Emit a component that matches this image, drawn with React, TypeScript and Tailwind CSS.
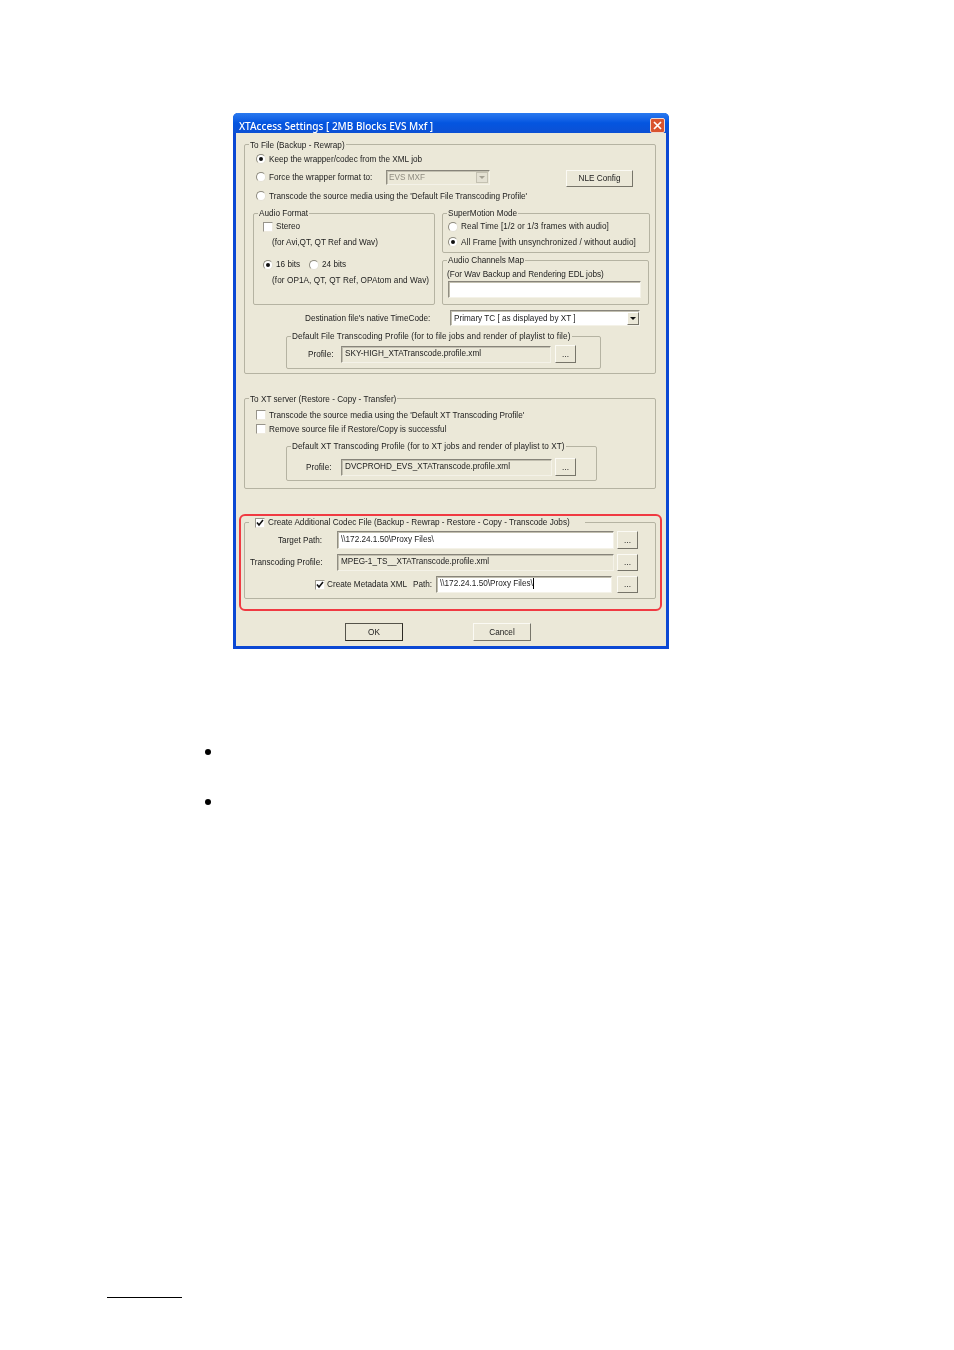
import type { ReactNode } from 'react'

const sunken = 'border border-t-[#87847a] border-l-[#918e82] border-r-[#f4f2e8] border-b-[#f4f2e8] shadow-[inset_1px_1px_0_#c2bfb0]'

function Group({ title, className, low, children }: { title: ReactNode; className: string; low?: boolean; children?: ReactNode }) {
  return (
    <fieldset className={`border border-[#b5b3a2] rounded-[2px] shrink-0 ${className}`}>
      <legend className={`ml-[4px] px-[1px] h-[12px] leading-[12px] ${low ? 'pt-[2px]' : 'pt-[1px]'}`}>{title}</legend>
      {children}
    </fieldset>
  )
}

function Radio({ on }: { on?: boolean }) {
  return (
    <span className="w-[10px] h-[10px] rounded-full bg-white border border-t-[#8d8a7d] border-l-[#8d8a7d] border-r-[#e4e1d3] border-b-[#e4e1d3] flex items-center justify-center shrink-0">
      {on && <span className="w-[4px] h-[4px] rounded-full bg-[#111]" />}
    </span>
  )
}

function Check({ on }: { on?: boolean }) {
  return (
    <span className="w-[10px] h-[10px] bg-white shrink-0 flex items-center justify-center border border-t-[#97948a] border-l-[#97948a] border-r-[#eeeade] border-b-[#eeeade]">
      {on && (
        <svg width="8" height="8" viewBox="0 0 8 8">
          <path d="M1 3.5 L3 6 L7 1" fill="none" stroke="#111" strokeWidth="1.6" />
        </svg>
      )}
    </span>
  )
}

function Btn({ label, className, dark }: { label: string; className: string; dark?: boolean }) {
  return (
    <div
      className={`flex items-center justify-center shrink-0 bg-[#ebe8d8] border ${
        dark
          ? 'border-t-[#55534a] border-l-[#55534a] border-r-[#2c2a24] border-b-[#2c2a24]'
          : 'border-t-[#fbfaf4] border-l-[#fbfaf4] border-r-[#77756a] border-b-[#77756a]'
      } ${className}`}
    >
      {label}
    </div>
  )
}

function Field({ value, className, white }: { value: ReactNode; className: string; white?: boolean }) {
  return (
    <div className={`flex items-center pl-[3px] pb-[2px] shrink-0 ${white ? 'bg-white' : 'bg-[#ebe8d8]'} ${sunken} ${className}`}>
      {value}
    </div>
  )
}

function App() {
  return (
    <div className="bg-white w-[954px] h-[1350px] overflow-hidden pt-[113px] font-['Liberation_Sans',sans-serif] text-[8.2px] leading-[11px] whitespace-nowrap text-[#1c1c1c]">
      {/* dialog */}
      <div className="ml-[233px] w-[436px] h-[536px] bg-[#ebe8d8] border-x-[3px] border-b-[3px] border-[#0b48d4] rounded-t-[5px] blur-[0.35px]">
        <div className="-mx-[3px] h-[20px] rounded-t-[5px] bg-gradient-to-b from-[#2a7af0] via-[#0455e0] to-[#0c50d4] flex items-center pl-[6px] pr-[4px]">
          <span className="text-white text-[10px] font-['Noto_Sans',sans-serif] font-medium leading-[13px] pt-[6px]">XTAccess Settings [ 2MB Blocks EVS Mxf ]</span>
          <div className="ml-auto mt-[4px] w-[15px] h-[15px] rounded-[2px] border border-[#f2d8cf] bg-[#d9542f] flex items-center justify-center">
            <svg width="9" height="9" viewBox="0 0 9 9">
              <path d="M1 1 L8 8 M8 1 L1 8" stroke="#fff" strokeWidth="1.7" />
            </svg>
          </div>
        </div>

        {/* To File */}
        <Group low title="To File (Backup - Rewrap)" className="mt-[5px] ml-[8px] w-[412px] h-[236px]">
          <div className="h-[18px] flex items-center pl-[11px] gap-[3px]">
            <Radio on />
            <span>Keep the wrapper/codec from the XML job</span>
          </div>
          <div className="h-[18px] flex items-center pl-[11px] gap-[3px]">
            <Radio />
            <span className="w-[114px]">Force the wrapper format to:</span>
            <div className={`w-[104px] h-[15px] bg-[#ebe8d8] text-[#8f8c80] flex items-center pl-[2px] ${sunken}`}>
              EVS MXF
              <span className="ml-auto mr-[1px] w-[12px] h-[11px] bg-[#e4e1d3] border border-[#c4c1b2] flex items-center justify-center">
                <span className="border-x-[3px] border-x-transparent border-t-[3px] border-t-[#a3a093]" />
              </span>
            </div>
            <Btn label="NLE Config" className="ml-[73px] w-[67px] h-[17px] mt-[3px]" />
          </div>
          <div className="h-[18px] mt-[1px] flex items-center pl-[11px] gap-[3px]">
            <Radio />
            <span>Transcode the source media using the 'Default File Transcoding Profile'</span>
          </div>

          <div className="flex mt-[2px] ml-[8px] gap-[7px]">
            <Group title="Audio Format" className="w-[182px] h-[98px]">
              <div className="h-[15px] flex items-center pl-[9px] gap-[3px]">
                <Check />
                <span>Stereo</span>
              </div>
              <div className="h-[15px] pl-[18px] leading-[17px]">(for Avi,QT, QT Ref and Wav)</div>
              <div className="h-[15px] mt-[8px] flex items-center pl-[9px] gap-[3px]">
                <Radio on />
                <span className="w-[30px]">16 bits</span>
                <Radio />
                <span>24 bits</span>
              </div>
              <div className="h-[15px] pl-[18px] leading-[17px] tracking-[0.08px]">(for OP1A, QT, QT Ref, OPAtom and Wav)</div>
            </Group>
            <div className="flex flex-col gap-[1px]">
              <Group title="SuperMotion Mode" className="w-[208px] h-[46px]">
                <div className="h-[15px] flex items-center pl-[5px] gap-[3px]">
                  <Radio />
                  <span className="tracking-[0.08px]">Real Time [1/2 or 1/3 frames with audio]</span>
                </div>
                <div className="h-[16px] flex items-center pl-[5px] gap-[3px]">
                  <Radio on />
                  <span className="tracking-[0.08px]">All Frame [with unsynchronized / without audio]</span>
                </div>
              </Group>
              <Group title="Audio Channels Map" className="w-[207px] h-[51px]">
                <div className="pl-[4px] h-[15px] leading-[17px]">(For Wav Backup and Rendering EDL jobs)</div>
                <Field value="" white className="ml-[5px] w-[193px] h-[17px]" />
              </Group>
            </div>
          </div>

          <div className="flex items-center mt-[5px] h-[16px]">
            <span className="ml-[60px] w-[145px]">Destination file's native TimeCode:</span>
            <div className={`w-[190px] h-[16px] bg-white flex items-center pl-[3px] ${sunken}`}>
              Primary TC [ as displayed by XT ]
              <span className="ml-auto w-[12px] h-[13px] bg-[#ebe8d8] border border-t-white border-l-white border-r-[#77756a] border-b-[#77756a] flex items-center justify-center">
                <span className="border-x-[3px] border-x-transparent border-t-[3px] border-t-[#111]" />
              </span>
            </div>
          </div>

          <Group
            title={<span className="tracking-[0.1px]">Default File Transcoding Profile (for to file jobs and render of playlist to file)</span>}
            className="mt-[4px] ml-[41px] w-[315px] h-[39px]"
          >
            <div className="flex items-center mt-[3px] gap-[4px]">
              <span className="ml-[21px] w-[29px]">Profile:</span>
              <Field value="SKY-HIGH_XTATranscode.profile.xml" className="w-[210px] h-[17px]" />
              <Btn label="..." className="w-[21px] h-[18px]" />
            </div>
          </Group>
        </Group>

        {/* To XT server */}
        <Group low title="To XT server (Restore - Copy - Transfer)" className="mt-[18px] ml-[8px] w-[412px] h-[97px]">
          <div className="h-[14px] mt-[4px] flex items-center pl-[11px] gap-[3px]">
            <Check />
            <span>Transcode the source media using the 'Default XT Transcoding Profile'</span>
          </div>
          <div className="h-[14px] flex items-center pl-[11px] gap-[3px]">
            <Check />
            <span>Remove source file if Restore/Copy is successful</span>
          </div>
          <Group
            title={<span className="tracking-[0.07px]">Default XT Transcoding Profile (for to XT jobs and render of playlist to XT)</span>}
            className="mt-[4px] ml-[41px] w-[311px] h-[41px]"
          >
            <div className="flex items-center mt-[6px] gap-[3px]">
              <span className="ml-[19px] w-[32px]">Profile:</span>
              <Field value="DVCPROHD_EVS_XTATranscode.profile.xml" className="w-[211px] h-[17px]" />
              <Btn label="..." className="w-[21px] h-[18px]" />
            </div>
          </Group>
        </Group>

        {/* Additional codec, ringed in red */}
        <div className="mt-[25px] ml-[3px] w-[423px] h-[97px] border-2 border-[#f03a42] rounded-[6px] pl-[3px]">
          <Group
            title={
              <span className="flex items-center gap-[3px] pr-[14px] -ml-[1px]">
                <span className="ml-[6px]"><Check on /></span>
                Create Additional Codec File (Backup - Rewrap - Restore - Copy - Transcode Jobs)
              </span>
            }
            className="w-[412px] h-[83px]"
          >
            <div className="flex items-center mt-[3px] h-[18px]">
              <span className="ml-[33px] w-[59px]">Target Path:</span>
              <Field value="\\172.24.1.50\Proxy Files\" white className="w-[277px] h-[18px]" />
              <Btn label="..." className="ml-[3px] w-[21px] h-[18px]" />
            </div>
            <div className="flex items-center mt-[5px] h-[17px]">
              <span className="ml-[5px] w-[87px]">Transcoding Profile:</span>
              <Field value="MPEG-1_TS__XTATranscode.profile.xml" className="w-[277px] h-[17px]" />
              <Btn label="..." className="ml-[3px] w-[21px] h-[17px]" />
            </div>
            <div className="flex items-center mt-[5px] h-[17px]">
              <span className="ml-[70px]"><Check on /></span>
              <span className="ml-[2px] w-[86px]">Create Metadata XML</span>
              <span className="w-[23px]">Path:</span>
              <Field
                value={<>\\172.24.1.50\Proxy Files\<span className="w-[1px] h-[11px] bg-black" /></>}
                white
                className="w-[176px] h-[17px]"
              />
              <Btn label="..." className="ml-[5px] w-[21px] h-[17px]" />
            </div>
          </Group>
        </div>

        <div className="flex mt-[12px] ml-[109px] gap-[70px]">
          <Btn label="OK" dark className="w-[58px] h-[18px]" />
          <Btn label="Cancel" className="w-[58px] h-[18px]" />
        </div>
      </div>

      {/* bullets below the picture */}
      <div className="ml-[205px] mt-[100px] w-[6px] h-[6px] rounded-full bg-black" />
      <div className="ml-[205px] mt-[44px] w-[6px] h-[6px] rounded-full bg-black" />

      {/* footnote rule */}
      <div className="ml-[107px] mt-[492px] w-[75px] h-[1px] bg-black" />
    </div>
  )
}

export default App
